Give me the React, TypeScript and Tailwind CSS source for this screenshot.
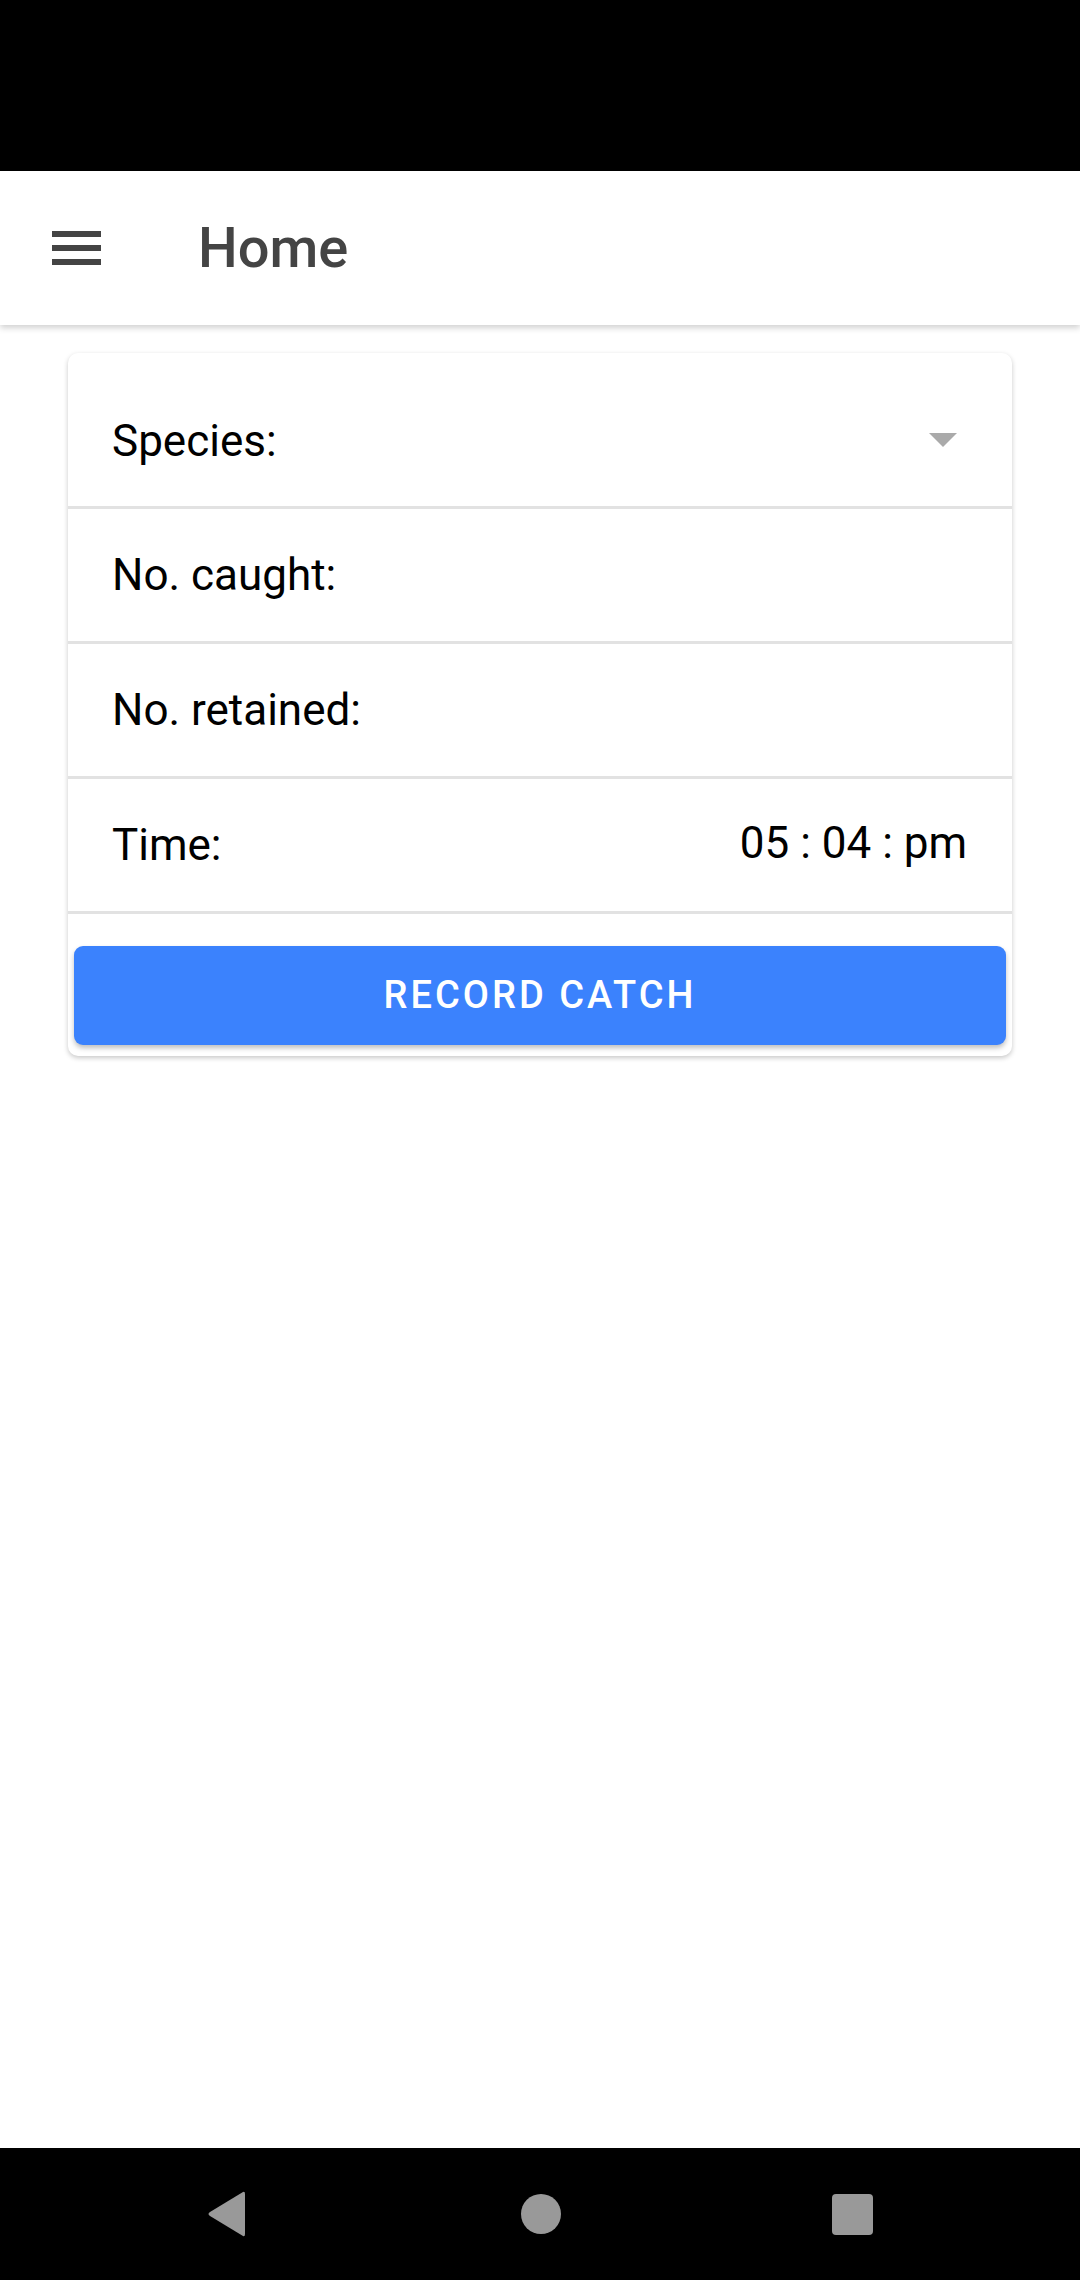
import React from 'react';

function Row({ label, children, first }: { label: string; children?: React.ReactNode; first?: boolean }) {
  return (
    <div
      className={
        'flex items-center justify-between pl-[44px] pr-[45px] border-b-[3px] border-[#e2e2e2] ' +
        (first ? 'h-[156px] pt-[22px]' : 'h-[135px]')
      }
    >
      <span className="text-[44px] text-black">{label}</span>
      {children}
    </div>
  );
}

export default function App() {
  return (
    <div className="w-[1080px] h-[2280px] flex flex-col bg-white font-['Roboto',sans-serif]">
      <div className="h-[171px] bg-black shrink-0" />
      <header className="h-[154px] shrink-0 flex items-center bg-white shadow-[0_3px_6px_rgba(0,0,0,0.18)] relative z-10">
        <div className="w-[49px] ml-[52px] flex flex-col gap-[8px]">
          <span className="h-[6px] bg-[#444]" />
          <span className="h-[6px] bg-[#444]" />
          <span className="h-[6px] bg-[#444]" />
        </div>
        <h1 className="ml-[97px] text-[56px] font-medium text-[#444] leading-none">Home</h1>
      </header>
      <main className="flex-1 px-[68px] pt-[28px]">
        <div className="rounded-[10px] bg-white shadow-[0_2px_5px_rgba(0,0,0,0.22)] overflow-hidden pb-[11px]">
          <Row label="Species:" first>
            <svg width="28" height="14" viewBox="0 0 28 14" className="mt-[-2px] mr-[10px]">
              <polygon points="0,0 28,0 14,14" fill="#aaaaaa" />
            </svg>
          </Row>
          <Row label="No. caught:" />
          <Row label="No. retained:" />
          <Row label="Time:">
            <span className="text-[44px] text-black -mt-[4px]">05 : 04 : pm</span>
          </Row>
          <div className="px-[6px] pt-[32px]">
            <button className="w-full h-[99px] rounded-[9px] bg-[#3b82fd] text-white text-[38px] font-medium tracking-[0.08em] shadow-[0_3px_5px_rgba(0,0,0,0.25)]">
              RECORD CATCH
            </button>
          </div>
        </div>
      </main>
      <nav className="h-[132px] shrink-0 bg-black flex items-center pl-[207px]">
        <svg width="38" height="46" viewBox="0 0 38 46">
          <path d="M36 1 L3 21 Q0 23 3 25 L36 45 Q38 46 38 43 L38 3 Q38 0 36 1 Z" fill="#999" />
        </svg>
        <span className="ml-[276px] w-[40px] h-[40px] rounded-full bg-[#999]" />
        <span className="ml-[271px] w-[41px] h-[41px] rounded-[4px] bg-[#999]" />
      </nav>
    </div>
  );
}
